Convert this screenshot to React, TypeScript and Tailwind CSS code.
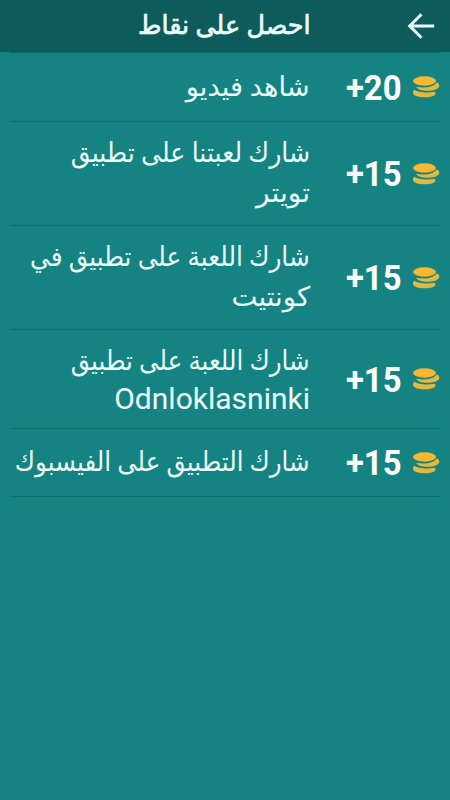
import { clsx } from "clsx";

type Reward = {
  id: string;
  points: number;
  lines: { text: string; className: string }[];
  rowClass: string;
};

const rewards: Reward[] = [
  {
    id: "video",
    points: 20,
    lines: [{ text: "شاهد فيديو", className: "h-[40px] scale-x-[1.01]" }],
    rowClass: "h-[69px]",
  },
  {
    id: "twitter",
    points: 15,
    lines: [
      { text: "شارك لعبتنا على تطبيق", className: "h-[40px] scale-x-[0.935]" },
      { text: "تويتر", className: "h-[40px] scale-x-[1.04]" },
    ],
    rowClass: "h-[104px]",
  },
  {
    id: "vk",
    points: 15,
    lines: [
      { text: "شارك اللعبة على تطبيق في", className: "h-[40px] scale-x-[0.918]" },
      { text: "كونتيت", className: "h-[40px] scale-x-[1.02]" },
    ],
    rowClass: "h-[104px]",
  },
  {
    id: "ok",
    points: 15,
    lines: [
      { text: "شارك اللعبة على تطبيق", className: "h-[40px] scale-x-[0.91]" },
      { text: "Odnloklasninki", className: "h-[35px] pb-[1px] text-[30px]" },
    ],
    rowClass: "h-[99px]",
  },
  {
    id: "facebook",
    points: 15,
    lines: [{ text: "شارك التطبيق على الفيسبوك", className: "h-[40px] scale-x-[0.908]" }],
    rowClass: "h-[68px]",
  },
];

function BackArrow() {
  return (
    <svg width="28" height="28" viewBox="0 0 28 28" fill="none" stroke="#ebfdfb" strokeWidth="3">
      <path d="M27.200 14H3M14.500 2.200L2.700 14l11.800 11.800" />
    </svg>
  );
}

function Coins() {
  return (
    <svg width="28" height="22" viewBox="0 0 28 22" className="shrink-0">
      <path d="M1 17c-.1-1.800.5-2.700 1.700-3.200C6 16.600 16 17.200 22.400 15.800c1.400.4 1.300 2 .6 2.900C19.500 22.600 1.800 22.300 1 17z" fill="#dfb944" />
      <path d="M4.300 10.800c6.700 1.600 17.200.8 20.200-4.300 3.800 1.200 3.500 4.500.7 6.300-5 3.100-19.700 2.800-20.900-2z" fill="#e3b940" />
      <ellipse cx="12.500" cy="5" rx="11.500" ry="4.700" fill="#f7b731" />
    </svg>
  );
}

function RewardRow({ reward }: { reward: Reward }) {
  return (
    <li className={clsx("flex items-center border-b border-[#0b6f6c]", reward.rowClass)}>
      <Coins />
      <span
        dir="ltr"
        className="mr-[9px] w-[57px] origin-left scale-x-[0.95] pt-[2px] text-left font-['Roboto'] text-[34.5px] leading-none font-bold whitespace-nowrap text-white"
      >
        +{reward.points}
      </span>
      <div className="ms-[36px] flex flex-col items-start text-[27px]">
        {reward.lines.map((line) => (
          <span key={line.text} className={clsx("flex origin-right items-center whitespace-nowrap", line.className)}>
            {line.text}
          </span>
        ))}
      </div>
    </li>
  );
}

export default function App() {
  return (
    <div
      dir="rtl"
      className="h-[800px] w-[450px] overflow-hidden bg-[#168383] font-['Roboto','DejaVu_Sans',sans-serif] text-[#ebfdfb]"
    >
      <header className="flex h-[52px] items-center bg-[#0e5b5c] ps-[15px]">
        <button type="button" aria-label="رجوع">
          <BackArrow />
        </button>
        <h1 className="ms-[96px] origin-right scale-x-[0.978] pb-[2px] text-[26px] font-normal whitespace-nowrap [-webkit-text-stroke:0.7px_#ebfdfb]">
          احصل على نقاط
        </h1>
      </header>
      <ul className="mx-[10px] border-t border-[#0c6866]">
        {rewards.map((reward) => (
          <RewardRow key={reward.id} reward={reward} />
        ))}
      </ul>
    </div>
  );
}
